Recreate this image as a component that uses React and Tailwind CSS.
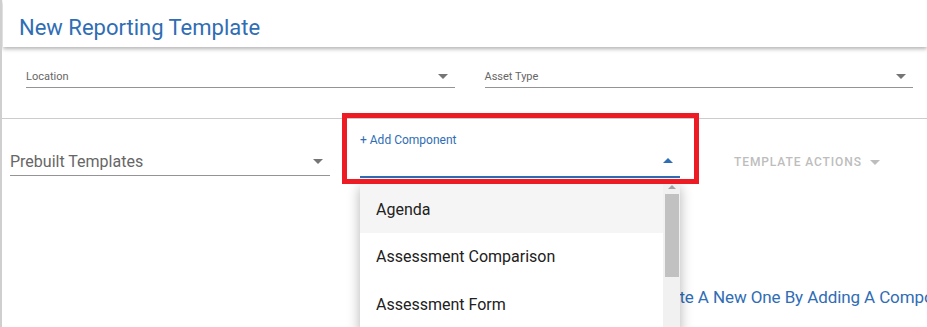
import React from "react"

const Caret = ({ up = false, className = "" }) => (
  <svg width="10" height="5" viewBox="0 0 10 5" className={className}>
    <path d={up ? "M0 5 L5 0 L10 5 Z" : "M0 0 L10 0 L5 5 Z"} fill="currentColor" />
  </svg>
)

const SelectField = ({ label, className = "" }) => (
  <div className={`flex flex-col ${className}`}>
    <div className="flex items-center justify-between h-[22px] pr-[7px]">
      <span className="text-[11px] text-[#666] pt-[2px]">{label}</span>
      <Caret className="text-[#757575]" />
    </div>
    <div className="h-px bg-[#949494]" />
  </div>
)

const items = ["Agenda", "Assessment Comparison", "Assessment Form"]

export default function App() {
  return (
    <div className="relative w-[927px] h-[327px] overflow-hidden bg-white font-['Roboto',sans-serif] border-l-2 border-[#cfcfcf]">
      {/* header */}
      <div className="h-[47px] ml-px bg-white shadow-[0_2px_4px_rgba(0,0,0,0.3)] pl-[16px] pt-[13px] relative z-10">
        <h1 className="text-[22px] leading-[29px] text-[#2f6db5]">New Reporting Template</h1>
      </div>

      {/* filters */}
      <div className="flex gap-[30px] pl-[24px] pr-[14px] pt-[18px] h-[72px] border-b border-[#cccccc]">
        <SelectField label="Location" className="flex-1" />
        <SelectField label="Asset Type" className="flex-1" />
      </div>

      {/* toolbar */}
      <div className="flex items-start pl-[8px] pt-[10px]">
        <div className="w-[320px] mt-[18px] flex flex-col">
          <div className="flex items-center justify-between h-[28px] pr-[7px]">
            <span className="text-[16px] text-[#666] pt-[1px]">Prebuilt Templates</span>
            <Caret className="text-[#757575]" />
          </div>
          <div className="h-px bg-[#949494]" />
        </div>

        <div className="relative w-[320px] ml-[30px]">
          <div className="text-[12px] text-[#2f6db5] leading-[16px] pt-[3px]">+ Add Component</div>
          <div className="flex justify-end pr-[7px] mt-[10px] h-[10px]">
            <Caret up className="text-[#2f6db5]" />
          </div>
          <div className="h-[2px] bg-[#2f6db5] mt-[8px]" />
        </div>

        <div className="ml-[54px] mt-[24px] flex items-center gap-[8px] text-[#bdbdbd]">
          <span className="text-[12px] font-medium tracking-[0.9px]">TEMPLATE ACTIONS</span>
          <Caret />
        </div>
      </div>

      {/* background hint */}
      <div className="absolute left-[421px] top-[285px] whitespace-nowrap text-[17px] tracking-[-0.1px] text-[#2f6db5]">
        Select A Prebuilt Template Or Create A New One By Adding A Component
      </div>

      {/* dropdown menu */}
      <div className="absolute left-[358px] top-[183px] w-[320px] h-[150px] bg-white shadow-[0_4px_12px_rgba(0,0,0,0.3)] flex z-20">
        <div className="flex-1">
          {items.map((it, i) => (
            <div
              key={it}
              className={`flex items-center pl-[16px] text-[16px] text-[#212121] ${i === 0 ? "bg-[#f5f5f5] h-[50px] pt-[3px]" : "h-[48px]"}`}
            >
              {it}
            </div>
          ))}
        </div>
        <div className="w-[17px] bg-[#f1f1f1] flex flex-col items-center">
          <svg width="8" height="4" viewBox="0 0 8 4" className="mt-[2px] text-[#a3a3a3]">
            <path d="M0 4 L4 0 L8 4 Z" fill="currentColor" />
          </svg>
          <div className="w-[14px] h-[83px] bg-[#c1c1c1] mt-[5px]" />
        </div>
      </div>

      {/* annotation box */}
      <div className="absolute left-[340px] top-[113px] w-[357px] h-[71px] border-[5px] border-[#ed1c24] z-30" />
    </div>
  )
}
